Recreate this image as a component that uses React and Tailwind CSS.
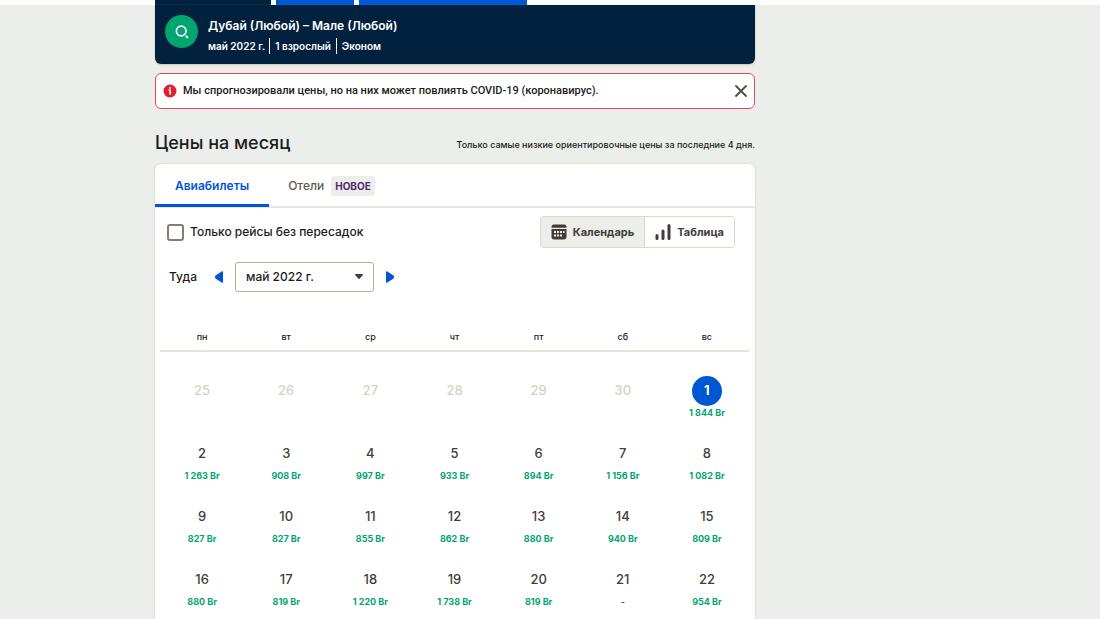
import { useState } from 'react'
import clsx from 'clsx'

const WEEKDAYS = ['пн', 'вт', 'ср', 'чт', 'пт', 'сб', 'вс']

const WEEKS = [
  [
    { day: 25, muted: true },
    { day: 26, muted: true },
    { day: 27, muted: true },
    { day: 28, muted: true },
    { day: 29, muted: true },
    { day: 30, muted: true },
    { day: 1, price: '1 844 Br' },
  ],
  [
    { day: 2, price: '1 263 Br' },
    { day: 3, price: '908 Br' },
    { day: 4, price: '997 Br' },
    { day: 5, price: '933 Br' },
    { day: 6, price: '894 Br' },
    { day: 7, price: '1 156 Br' },
    { day: 8, price: '1 082 Br' },
  ],
  [
    { day: 9, price: '827 Br' },
    { day: 10, price: '827 Br' },
    { day: 11, price: '855 Br' },
    { day: 12, price: '862 Br' },
    { day: 13, price: '880 Br' },
    { day: 14, price: '940 Br' },
    { day: 15, price: '809 Br' },
  ],
  [
    { day: 16, price: '880 Br' },
    { day: 17, price: '819 Br' },
    { day: 18, price: '1 220 Br' },
    { day: 19, price: '1 738 Br' },
    { day: 20, price: '819 Br' },
    { day: 21 },
    { day: 22, price: '954 Br' },
  ],
]

function SearchIcon() {
  return (
    <svg viewBox="0 0 14 14" className="h-3.5 w-3.5" fill="none" stroke="currentColor" strokeLinecap="round">
      <circle cx="6.2" cy="6" r="4.8" strokeWidth="1.7" />
      <path d="M11.4 11.4l1 1" strokeWidth="2" />
    </svg>
  )
}

function InfoIcon() {
  return (
    <svg viewBox="0 0 14 14" className="h-3.5 w-3.5 shrink-0">
      <circle cx="7" cy="7" r="6.5" fill="#df1f33" />
      <circle cx="7" cy="3.9" r="1" fill="#fff" />
      <path d="M5.6 6.2h1.5v4.3" fill="none" stroke="#fff" strokeWidth="1.5" />
    </svg>
  )
}

function CloseIcon() {
  return (
    <svg viewBox="0 0 12 12" className="h-3 w-3" fill="none" stroke="currentColor" strokeWidth="1.8" strokeLinecap="round">
      <path d="M1 1l10 10M11 1L1 11" />
    </svg>
  )
}

function CalendarIcon() {
  return (
    <svg viewBox="0 0 16 16" className="h-4 w-4" fill="currentColor">
      <path d="M3 .5h10A2.5 2.5 0 0 1 15.5 3v.7H.5V3A2.5 2.5 0 0 1 3 .5z" />
      <path
        fillRule="evenodd"
        d="M.5 5h15v7.8a2.7 2.7 0 0 1-2.7 2.7H3.2A2.7 2.7 0 0 1 .5 12.8zM6 7v2h2V7zM9 7v2h2V7zM12 7v2h1.5V7zM3 7v2h2V7zM3 10.5v2h2v-2zM6 10.5v2h2v-2zM9 10.5v2h2v-2z"
      />
    </svg>
  )
}

function ChartIcon() {
  return (
    <svg viewBox="0 0 16 16" className="h-4 w-4" fill="currentColor">
      <rect x="0.5" y="10" width="3" height="6" rx="1.5" />
      <rect x="6.5" y="5.5" width="3" height="10.5" rx="1.5" />
      <rect x="12.5" y="0" width="3" height="16" rx="1.5" />
    </svg>
  )
}

function SearchSummary() {
  return (
    <section className="flex items-start gap-2.5 rounded-b-md bg-[#02213f] p-2.5 text-white shadow-[0_1px_2px_#c9c5a3]">
      <button
        type="button"
        aria-label="Поиск"
        className="flex h-[33px] w-[33px] shrink-0 items-center justify-center rounded-full bg-[#00a56f]"
      >
        <SearchIcon />
      </button>
      <div className="pt-0.5">
        <h1 className="text-[12px] leading-[18px] font-semibold">Дубай (Любой) – Мале (Любой)</h1>
        <ul className="mt-[3px] flex text-[10px] leading-4 font-semibold">
          <li className="pr-1">май 2022 г.</li>
          <li className="border-l border-white px-[5px]">1 взрослый</li>
          <li className="border-l border-white pl-[5px]">Эконом</li>
        </ul>
      </div>
    </section>
  )
}

function Notice({ onClose }) {
  return (
    <div
      role="alert"
      className="mt-[9px] flex items-center gap-1.5 rounded-md border border-[#de4a58] bg-white px-[7px] py-[9px] font-['Roboto','Inter',sans-serif] text-[11px] leading-4 font-medium"
    >
      <InfoIcon />
      <p className="flex-1">Мы спрогнозировали цены, но на них может повлиять COVID-19 (коронавирус).</p>
      <button type="button" aria-label="Закрыть" onClick={onClose} className="text-[#544c43]">
        <CloseIcon />
      </button>
    </div>
  )
}

function Tabs() {
  return (
    <div role="tablist" className="flex border-b-2 border-[#e8e7df]">
      <button
        type="button"
        role="tab"
        aria-selected="true"
        className="-mb-px border-b-[3px] border-[#0057d3] px-5 pt-[13px] pb-[9px] text-[12px] leading-[18px] font-semibold text-[#0057d3]"
      >
        Авиабилеты
      </button>
      <button
        type="button"
        role="tab"
        aria-selected="false"
        className="flex items-center gap-[7px] px-[19px] pt-0.5 text-[12px] leading-[18px] font-medium text-[#625a50]"
      >
        Отели
        <span className="rounded-[3px] bg-[#ebeeeb] px-1 text-[10px] leading-5 font-bold text-[#56266c]">НОВОЕ</span>
      </button>
    </div>
  )
}

function Toolbar({ view, setView }) {
  const button = 'flex items-center gap-1.5 px-2.5 py-[7px] text-[11px] leading-4 font-bold text-[#443c38]'

  return (
    <div className="flex flex-wrap items-center justify-between gap-2 pt-2 pr-5 pl-3">
      <label className="flex items-center gap-1.5 text-[12px] leading-4 font-medium">
        <input
          type="checkbox"
          className="h-[17px] w-[17px] appearance-none rounded-[3px] border-2 border-[#877c6e] bg-white checked:bg-[#0057d3]"
        />
        Только рейсы без пересадок
      </label>
      <div className="flex overflow-hidden rounded-[3px] border border-[#dcdbc8]">
        <button
          type="button"
          onClick={() => setView('calendar')}
          className={clsx(button, 'border-r border-[#dcdbc8]', view === 'calendar' && 'bg-[#ebeeeb]')}
        >
          <CalendarIcon />
          Календарь
        </button>
        <button type="button" onClick={() => setView('table')} className={clsx(button, view === 'table' && 'bg-[#ebeeeb]')}>
          <ChartIcon />
          Таблица
        </button>
      </div>
    </div>
  )
}

function MonthPicker() {
  return (
    <div className="flex items-center pt-3.5 pl-3.5 text-[12px] leading-4 font-medium">
      <label htmlFor="month" className="mr-[17px]">
        Туда
      </label>
      <button type="button" aria-label="Предыдущий месяц" className="mr-3 text-[#0057d3]">
        <svg viewBox="0 0 9 12" className="h-3 w-[9px]" fill="currentColor">
          <path d="M9 1v10q0 1-1 .7L1.5 7.5q-1.5-1.5 0-3L8 .3Q9 0 9 1z" />
        </svg>
      </button>
      <div className="relative">
        <select
          id="month"
          className="h-[30px] w-[139px] appearance-none rounded-[3px] border border-[#b5ae96] bg-white px-2.5 text-[12px] font-medium"
        >
          <option>май 2022 г.</option>
        </select>
        <svg
          viewBox="0 0 8 5"
          className="pointer-events-none absolute top-3 right-[11px] h-[5px] w-2"
          fill="#443c38"
        >
          <path d="M.6 0h6.8q.9 0 .4.9L4.8 4.6q-.8.8-1.6 0L.2.9Q-.3 0 .6 0z" />
        </svg>
      </div>
      <button type="button" aria-label="Следующий месяц" className="ml-3 text-[#0057d3]">
        <svg viewBox="0 0 9 12" className="h-3 w-[9px]" fill="currentColor">
          <path d="M0 1v10q0 1 1 .7l6.5-4.2q1.5-1.5 0-3L1 .3Q0 0 0 1z" />
        </svg>
      </button>
    </div>
  )
}

function PriceCalendar() {
  const [selected, setSelected] = useState(1)

  return (
    <div className="pt-[38px] pr-1.5 pl-[5px]">
      <table className="w-full table-fixed border-collapse text-center">
        <thead>
          <tr className="border-b-2 border-[#e4e3d8]">
            {WEEKDAYS.map((name) => (
              <th key={name} scope="col" className="pb-1.5 text-[9px] leading-[14px] font-medium">
                {name}
              </th>
            ))}
          </tr>
        </thead>
        <tbody>
          {WEEKS.map((week, i) => (
            <tr key={i} className="align-top">
              {week.map(({ day, price, muted }) => {
                const active = !muted && day === selected
                return (
                  <td key={day} className={clsx('p-0', i === 0 ? 'pt-6' : 'pt-5')}>
                    <button
                      type="button"
                      disabled={muted}
                      onClick={() => setSelected(day)}
                      className={clsx(
                        'mx-auto flex h-[30px] w-[30px] items-center justify-center rounded-full text-[13px]',
                        active && 'bg-[#0057d3] font-bold text-white',
                        muted && 'font-medium text-[#d5d3c3]',
                        !active && !muted && 'font-medium text-[#443c38]',
                      )}
                    >
                      {day}
                    </button>
                    {!muted && (
                      <p className={clsx('text-[9px] leading-[13px] font-bold', price ? 'text-[#00a56f]' : 'text-[#625a50]')}>
                        {price || '-'}
                      </p>
                    )}
                  </td>
                )
              })}
            </tr>
          ))}
        </tbody>
      </table>
    </div>
  )
}

export default function App() {
  const [noticeOpen, setNoticeOpen] = useState(true)
  const [view, setView] = useState('calendar')

  return (
    <div className="flex min-h-screen flex-col bg-[#ebeeeb] font-['Inter','Noto_Sans',sans-serif] text-[#1d1b20]">
      <header className="bg-white">
        <div className="mx-auto flex h-[5px] w-full max-w-[790px] gap-[5px]">
          <span className="w-[116px] bg-[#02213f]" />
          <span className="w-[78px] bg-[#0057d3]" />
          <span className="w-[168px] bg-[#0057d3]" />
        </div>
      </header>

      <div className="mx-auto grid w-full max-w-[790px] flex-1 md:grid-cols-[minmax(0,1fr)_190px]">
        <main className="flex flex-col">
          <SearchSummary />
          {noticeOpen && <Notice onClose={() => setNoticeOpen(false)} />}

          <div className="mt-5 mb-2 flex items-center justify-between gap-4">
            <h2 className="text-[18px] leading-[27px] font-medium">Цены на месяц</h2>
            <p className="pt-1 text-[9px] leading-4 font-medium">
              Только самые низкие ориентировочные цены за последние 4 дня.
            </p>
          </div>

          <section className="flex-1 rounded-t-md bg-white shadow-[0_0_2px_#c9c5a3]">
            <Tabs />
            <Toolbar view={view} setView={setView} />
            <MonthPicker />
            <PriceCalendar />
          </section>
        </main>
      </div>
    </div>
  )
}
